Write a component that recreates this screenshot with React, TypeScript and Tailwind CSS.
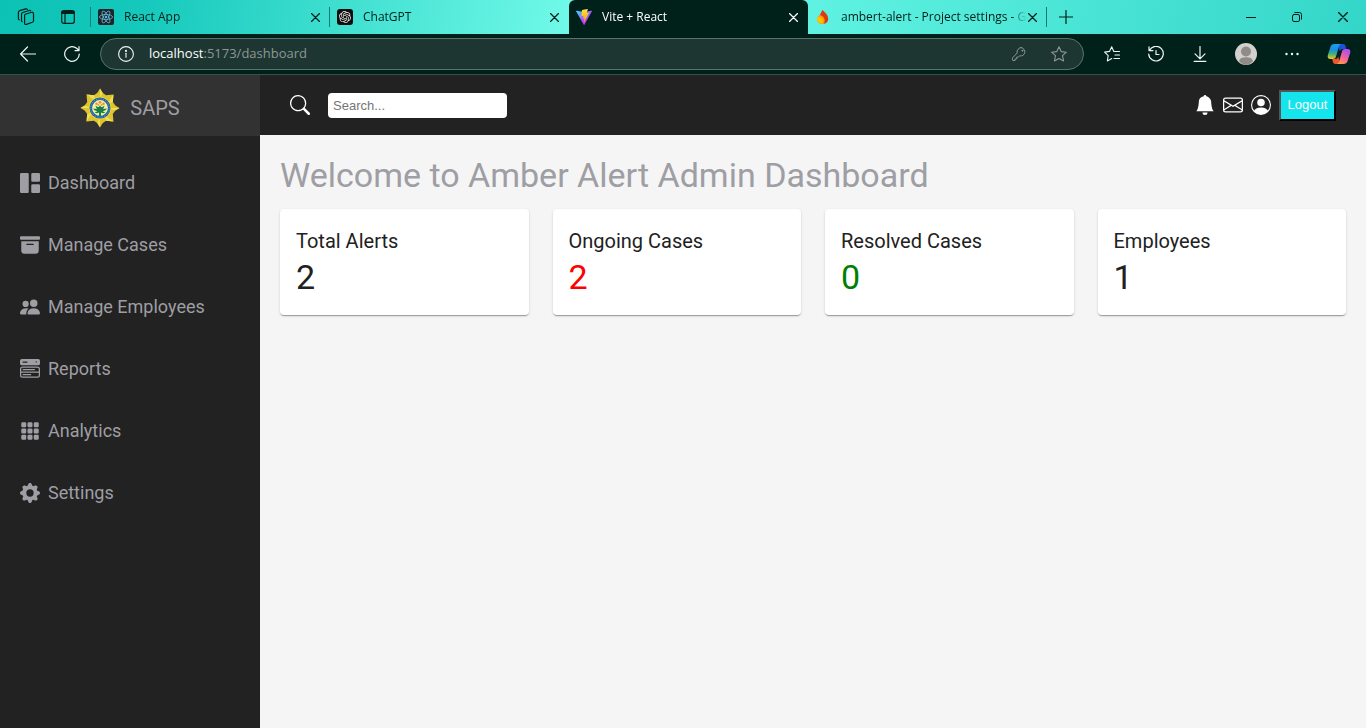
import type { ReactNode } from "react";
import {
  BsGrid1X2Fill,
  BsFillArchiveFill,
  BsPeopleFill,
  BsMenuButtonWideFill,
  BsFillGrid3X3GapFill,
  BsFillGearFill,
  BsSearch,
  BsFillBellFill,
  BsEnvelope,
  BsPersonCircle,
} from "react-icons/bs";
import { SiOpenai } from "react-icons/si";

const line = {
  fill: "none",
  stroke: "currentColor",
  strokeLinecap: "round",
  strokeLinejoin: "round",
} as const;

function CloseIcon({ className = "size-[9px]" }: { className?: string }) {
  return (
    <svg viewBox="0 0 9 9" className={className} {...line} strokeWidth="1.2">
      <path d="M.5.5l8 8M8.5.5l-8 8" />
    </svg>
  );
}

function WorkspacesIcon() {
  return (
    <svg viewBox="0 0 18 18" className="size-[18px]" {...line} strokeWidth="1.2">
      <path d="M8.2 6.3l6.6-2c.9-.3 1.7.3 1.7 1.2v7.2c0 .8-.4 1.3-1.1 1.6l-6 2.1c-1 .3-1.8-.2-1.8-1.2V7.700c0-.7.1-1.200.6-1.400z" />
      <path d="M5.200 13.800c-.5-.2-.7-.7-.7-1.300V6.200c0-.9.4-1.400 1.200-1.700l6.500-2c.6-.1 1.100 0 1.500.4" />
      <path d="M2.200 11.800c-.5-.2-.8-.7-.8-1.300V4.400c0-.9.4-1.400 1.200-1.700L8.800.9c.7-.2 1.200 0 1.600.4" />
    </svg>
  );
}

function TabActionsIcon() {
  return (
    <svg viewBox="0 0 14 14" className="size-[14px]" {...line} strokeWidth="1.2">
      <rect x=".7" y=".7" width="12.6" height="12.6" rx="2" />
      <path d="M1 1.900h12M1 3h12" strokeWidth="1.8" />
      <path d="M4 4v9" />
    </svg>
  );
}

function ReactLogo() {
  return (
    <svg viewBox="0 0 16 16" className="size-4 shrink-0">
      <rect width="16" height="16" rx="2" fill="#20232a" />
      <g fill="none" stroke="#61b9d8" strokeWidth=".8">
        <ellipse cx="8" cy="8" rx="6.6" ry="2.5" />
        <ellipse cx="8" cy="8" rx="6.6" ry="2.5" transform="rotate(60 8 8)" />
        <ellipse cx="8" cy="8" rx="6.6" ry="2.5" transform="rotate(120 8 8)" />
      </g>
      <circle cx="8" cy="8" r="1.3" fill="#61b9d8" />
    </svg>
  );
}

function ChatLogo() {
  return (
    <span className="flex size-4 shrink-0 items-center justify-center rounded-[3px] bg-[#0d0d0d] text-[#e8e8e8]">
      <SiOpenai className="size-3" />
    </span>
  );
}

function ViteLogo() {
  return (
    <svg viewBox="0 0 256 257" className="size-4 shrink-0">
      <defs>
        <linearGradient id="vite-a" x1="-.8%" x2="57.6%" y1="7.6%" y2="78.4%">
          <stop offset="0%" stopColor="#41D1FF" />
          <stop offset="100%" stopColor="#BD34FE" />
        </linearGradient>
        <linearGradient id="vite-b" x1="43.4%" x2="50.3%" y1="2.2%" y2="89%">
          <stop offset="0%" stopColor="#FFEA83" />
          <stop offset="8.3%" stopColor="#FFDD35" />
          <stop offset="100%" stopColor="#FFA800" />
        </linearGradient>
      </defs>
      <path
        fill="url(#vite-a)"
        d="M255.153 37.938L134.897 252.976c-2.483 4.440-8.862 4.466-11.382.048L.875 37.958c-2.746-4.814 1.371-10.646 6.827-9.670l120.385 21.517a6.537 6.537 0 0 0 2.322-.004l117.867-21.483c5.438-.991 9.574 4.796 6.877 9.620z"
      />
      <path
        fill="url(#vite-b)"
        d="M185.432.063L96.440 17.501a3.268 3.268 0 0 0-2.634 3.014l-5.474 92.456a3.268 3.268 0 0 0 3.997 3.378l24.777-5.718c2.318-.535 4.413 1.507 3.936 3.838l-7.361 36.047c-.495 2.426 1.782 4.500 4.151 3.780l15.304-4.649c2.372-.720 4.652 1.360 4.150 3.788l-11.698 56.621c-.732 3.542 3.979 5.473 5.943 2.437l1.313-2.028 72.516-144.720c1.215-2.423-.880-5.186-3.540-4.672l-25.505 4.922c-2.396.462-4.435-1.770-3.759-4.114l16.646-57.705c.677-2.350-1.370-4.583-3.769-4.113z"
      />
    </svg>
  );
}

function FlameLogo() {
  return (
    <svg viewBox="0 0 16 16" className="size-4 shrink-0">
      <path d="M7.400 1c3 2.500 5.800 5 5.800 8.800 0 3-2.200 5-5 5.200-2.300.1-3.700-1-4.200-3.400C3.200 7.500 5.500 5.500 7.400 1z" fill="#e03a0c" />
      <path d="M2 10.500c0-2.500 1.500-4 3.500-4.200 2.500.6 4 2.700 4.200 5.200 0 1.300-.3 2.300-1 3.400C5 15.200 2.200 14 2 10.500z" fill="#ff9f0a" />
      <path d="M2 10.500c0-1.500.8-2.500 2-2.800 2.200.6 3.600 2.300 3.800 4.300 0 .9-.1 1.500-.4 2.200C4.800 14.300 2.200 13.300 2 10.500z" fill="#ffc400" />
    </svg>
  );
}

function PoliceBadge() {
  return (
    <svg viewBox="0 0 40 40" className="size-10">
      <path
        d="M20 .5l2.600 4.200 3.400 2.500 7.500-.7-.7 7.500 2.500 3.400 4.200 2.600-4.200 2.600-2.500 3.400.7 7.500-7.500-.7-3.400 2.500L20 39.500l-2.600-4.200-3.400-2.500-7.500.7.7-7.500-2.500-3.400L.5 20l4.200-2.600L7.200 14l-.7-7.500 7.500.7 3.400-2.500z"
        fill="#dfc32c"
      />
      <g fill="#f1dd52">
        <path d="M20 .5l2.600 4.200L20 12zM39.500 20l-4.200 2.600L28 20zM20 39.500l-2.600-4.200L20 28zM.5 20l4.200-2.600L12 20z" />
        <path d="M6.500 6.500l7.500.7 2 5.800zM33.500 6.500l-.7 7.500-5.800 2zM33.500 33.500l-7.500-.7-2-5.800zM6.500 33.500l.7-7.500 5.800-2z" />
      </g>
      <circle cx="20" cy="20" r="11.200" fill="#ead545" />
      <circle cx="20" cy="20" r="9.200" fill="#f6f29c" stroke="#1c62a6" strokeWidth="2.600" />
      <circle cx="20" cy="20" r="9.200" fill="none" stroke="#8db9d6" strokeWidth=".8" strokeDasharray="1 1.3" />
      <path
        d="M19 28v-3.500c-1.800 1-3.600.8-4.500-.5 1.300.1 2.300-.3 2.800-1-1.800.2-3.500-.8-4-2.700 1.500.8 3 .6 3.800.2-1-.7-1.500-1.800-1.400-3 1 1 2 1.500 3.300 1.600L20 17l1 2.100c1.300-.1 2.300-.6 3.300-1.600.1 1.200-.4 2.300-1.400 3 .8.4 2.300.6 3.800-.2-.5 1.900-2.200 2.900-4 2.700.5.7 1.500 1.100 2.800 1-.9 1.300-2.700 1.500-4.500.5V28z"
        fill="#16804a"
      />
      <g fill="#f08648">
        <circle cx="16.500" cy="15.800" r="1.200" />
        <circle cx="20" cy="14.300" r="1.400" />
        <circle cx="23.500" cy="15.800" r="1.200" />
        <circle cx="18.300" cy="16.800" r=".9" />
        <circle cx="21.700" cy="16.800" r=".9" />
      </g>
    </svg>
  );
}

function CopilotLogo() {
  return (
    <svg viewBox="0 0 24 24" className="size-6">
      <defs>
        <linearGradient id="cp-a" x1=".3" y1="0" x2=".2" y2="1">
          <stop offset="0" stopColor="#1b9bf0" />
          <stop offset=".35" stopColor="#1a8fe0" />
          <stop offset=".65" stopColor="#45ac7c" />
          <stop offset="1" stopColor="#f2c91b" />
        </linearGradient>
        <linearGradient id="cp-b" x1=".7" y1="0" x2=".2" y2="1">
          <stop offset="0" stopColor="#a94df5" />
          <stop offset=".5" stopColor="#f0609b" />
          <stop offset="1" stopColor="#ff9a4a" />
        </linearGradient>
      </defs>
      <path d="M11 2h5c1.500 0 2.200.8 2.600 2.200L19.300 7H16c-1.800 0-2.700 1-3.200 2.600z" fill="#1b50d8" />
      <path d="M13 22H8.500c-1.500 0-2.200-.8-2.600-2.200L5.200 17H8c1.800 0 2.700-1 3.200-2.600z" fill="#f2542d" />
      <path d="M7.500 2h7c-1.500.3-2.200 1.300-2.700 3L9 14.500C8.400 16.300 7.500 17 5.800 17H3.300C1.200 17 .2 15.500.8 13.300L3.400 5C4 3 5.300 2 7.500 2z" fill="url(#cp-a)" />
      <path d="M16.500 22h-7c1.500-.3 2.200-1.300 2.700-3L15 9.500C15.600 7.700 16.500 7 18.200 7h2.500c2.100 0 3.100 1.500 2.500 3.700L20.600 19c-.6 2-1.900 3-4.100 3z" fill="url(#cp-b)" />
    </svg>
  );
}

function Tab({
  icon,
  title,
  active = false,
  divider = false,
}: {
  icon: ReactNode;
  title: string;
  active?: boolean;
  divider?: boolean;
}) {
  return (
    <div
      className={`flex h-full w-[239px] min-w-0 items-center pr-[10px] pl-[7px] ${
        active ? "rounded-t-md bg-[#00201a] text-white" : "text-[#00201a]"
      }`}
    >
      {icon}
      <span className="ml-[10px] min-w-0 flex-1 overflow-hidden text-xs whitespace-nowrap [mask-image:linear-gradient(to_right,black_92%,transparent)]">
        {title}
      </span>
      <button aria-label={`Close ${title}`} className="ml-[2px] shrink-0">
        <CloseIcon />
      </button>
      {divider && <span className="-mr-[10px] ml-[9px] h-5 w-px bg-[#0d7d73]" />}
    </div>
  );
}

function BrowserChrome() {
  return (
    <div className="shrink-0 font-['Open_Sans','Noto_Sans',sans-serif]">
      <div className="flex h-[34px] items-center bg-[linear-gradient(100deg,#0cc2b5_0%,#14c8bb_10%,#74fbea_43%,#5cf0e0_62%,#34d6c9_100%)] text-[#00201a]">
        <button aria-label="Workspaces" className="ml-[17px]">
          <WorkspacesIcon />
        </button>
        <button aria-label="Tab actions" className="ml-[26px]">
          <TabActionsIcon />
        </button>
        <span className="ml-[15px] h-5 w-px bg-[#0d7d73]" />
        <Tab icon={<ReactLogo />} title="React App" divider />
        <Tab icon={<ChatLogo />} title="ChatGPT" />
        <Tab icon={<ViteLogo />} title="Vite + React" active />
        <Tab icon={<FlameLogo />} title="ambert-alert - Project settings - G" divider />
        <button aria-label="New tab" className="ml-3">
          <svg viewBox="0 0 14 14" className="size-[14px]" {...line} strokeWidth="1.2">
            <path d="M7 .5v13M.5 7h13" />
          </svg>
        </button>
        <div className="mr-[18px] ml-auto flex items-center gap-9">
          <button aria-label="Minimize">
            <svg viewBox="0 0 10 10" className="size-[10px]" {...line}>
              <path d="M0 5.500h10" />
            </svg>
          </button>
          <button aria-label="Restore">
            <svg viewBox="0 0 10 10" className="size-[10px]" {...line}>
              <rect x=".5" y="2.5" width="7" height="7" rx="1.5" />
              <path d="M2.800.5h4.700a2 2 0 0 1 2 2v4.700" />
            </svg>
          </button>
          <button aria-label="Close window">
            <CloseIcon className="size-[10px]" />
          </button>
        </div>
      </div>

      <div className="flex h-[41px] items-center border-b border-[#34524b] bg-[#00201a] text-[#f0f5f4]">
        <button aria-label="Back" className="ml-5">
          <svg viewBox="0 0 16 16" className="size-4" {...line} strokeWidth="1.2">
            <path d="M15.500 8H.8M7.500 1L.6 8l6.900 7" />
          </svg>
        </button>
        <button aria-label="Reload" className="ml-7">
          <svg viewBox="0 0 16 16" className="size-4" {...line} strokeWidth="1.2">
            <path d="M15.300 8A7.300 7.300 0 1 1 12.600 2.300L15 4.500M15 .7v3.900h-4" />
          </svg>
        </button>
        <div className="ml-5 flex h-8 flex-1 items-center rounded-full border border-[#5a736d] bg-[#1e3631] pr-4 pl-[17px]">
          <svg viewBox="0 0 16 16" className="size-4" {...line} strokeWidth="1.1">
            <circle cx="8" cy="8" r="7.400" />
            <path d="M8 7.300v4" />
            <circle cx="8" cy="4.900" r=".5" fill="currentColor" />
          </svg>
          <span className="ml-[15px] flex-1 text-[13px] text-[#8b9895]">
            <span className="text-white">localhost</span>:5173/dashboard
          </span>
          <button aria-label="Saved passwords" className="text-[#8b9895]">
            <svg viewBox="0 0 14 14" className="size-[14px]" {...line}>
              <path d="M9.200.6a4.200 4.200 0 0 0-4 5.400L.8 10.500c-.2.200-.3.400-.3.700v1.700c0 .4.200.6.600.6h2v-1.600h1.600v-1.700h1.500l1.300-1.400A4.200 4.200 0 1 0 9.200.6z" />
              <circle cx="10.300" cy="3.700" r=".5" fill="currentColor" />
            </svg>
          </button>
          <button aria-label="Add to favorites" className="ml-[25px] text-[#8b9895]">
            <svg viewBox="0 0 16 16" className="size-4" {...line} strokeWidth="1.1">
              <path d="M8 .8l2.200 4.800 5.200.6-3.900 3.500 1.100 5.300L8 12.400 3.400 15l1.100-5.300L.6 6.200l5.200-.6z" />
            </svg>
          </button>
        </div>
        <div className="mr-[15px] ml-5 flex items-center">
          <button aria-label="Favorites">
            <svg viewBox="0 0 16 16" className="size-4" {...line} strokeWidth="1.1">
              <path d="M9.800 5.500L7.700.8 5.500 5.400.6 6.100l3.600 3.500L3.300 15l4.500-2.500M9.800 5.500h5.700M11 9h4.500M10 12.500h5.500" />
            </svg>
          </button>
          <button aria-label="History" className="ml-7">
            <svg viewBox="0 0 16 16" className="size-4" {...line} strokeWidth="1.2">
              <path d="M1.500 4.300A7.300 7.300 0 1 1 .7 8M1 .8v3.800h3.900M8 4.500v4h3" />
            </svg>
          </button>
          <button aria-label="Downloads" className="ml-7">
            <svg viewBox="0 0 16 16" className="size-4" {...line} strokeWidth="1.2">
              <path d="M8 .5v12M3 7.800l5 5 5-5M2.200 15.400h11.600" />
            </svg>
          </button>
          <button aria-label="Profile" className="ml-[27px]">
            <svg viewBox="0 0 22 22" className="size-[22px]">
              <circle cx="11" cy="11" r="11" fill="#d4d0cd" />
              <circle cx="11" cy="8.500" r="5" fill="#8f8b88" />
              <path d="M4.200 18.500c0-3.500 3-4.300 6.800-4.300s6.800.8 6.800 4.300A11 11 0 0 1 11 22a11 11 0 0 1-6.800-3.500z" fill="#8f8b88" />
            </svg>
          </button>
          <button aria-label="Settings and more" className="ml-7">
            <svg viewBox="0 0 14 4" className="h-1 w-[14px]" fill="currentColor">
              <circle cx="1.500" cy="2" r="1.200" />
              <circle cx="7" cy="2" r="1.200" />
              <circle cx="12.500" cy="2" r="1.200" />
            </svg>
          </button>
          <button aria-label="Copilot" className="ml-7">
            <CopilotLogo />
          </button>
        </div>
      </div>
    </div>
  );
}

const menu = [
  { label: "Dashboard", Icon: BsGrid1X2Fill },
  { label: "Manage Cases", Icon: BsFillArchiveFill },
  { label: "Manage Employees", Icon: BsPeopleFill },
  { label: "Reports", Icon: BsMenuButtonWideFill },
  { label: "Analytics", Icon: BsFillGrid3X3GapFill },
  { label: "Settings", Icon: BsFillGearFill },
];

const stats = [
  { label: "Total Alerts", value: 2, color: "text-[#212121]" },
  { label: "Ongoing Cases", value: 2, color: "text-[#ff0000]" },
  { label: "Resolved Cases", value: 0, color: "text-[#008000]" },
  { label: "Employees", value: 1, color: "text-[#212121]" },
];

function Sidebar() {
  return (
    <aside className="w-[260px] shrink-0 bg-[#222222] text-[#9e9ea4]">
      <div className="flex h-[61px] items-center justify-center gap-[10px] bg-[#323232] pt-1 text-xl">
        <PoliceBadge />
        <span>SAPS</span>
      </div>
      <nav className="pt-4">
        <ul>
          {menu.map(({ label, Icon }) => (
            <li key={label}>
              <a href="#" className="flex h-[62px] items-center gap-2 px-5 text-lg">
                <Icon className="size-5" />
                {label}
              </a>
            </li>
          ))}
        </ul>
      </nav>
    </aside>
  );
}

function Header() {
  return (
    <header className="flex h-[60px] items-center justify-between bg-[#222222] px-[30px] text-white">
      <div className="flex items-center gap-[18px]">
        <BsSearch className="size-5" />
        <input
          type="text"
          aria-label="Search"
          placeholder="Search..."
          className="h-[25px] w-[179px] rounded-[4px] bg-white px-[5px] font-['Liberation_Sans',Arial,sans-serif] text-[13px] text-black placeholder:text-[#757575]"
        />
      </div>
      <div className="flex items-center gap-2">
        <BsFillBellFill className="size-5" />
        <BsEnvelope className="size-5" />
        <BsPersonCircle className="size-5" />
        <button className="h-[31px] w-[57px] border-2 border-t-[#555555] border-r-black border-b-black border-l-[#555555] bg-[#14e4ec] font-['Liberation_Sans',Arial,sans-serif] text-[13px] text-white">
          Logout
        </button>
      </div>
    </header>
  );
}

export default function App() {
  return (
    <div className="flex min-h-screen flex-col font-[Roboto,sans-serif]">
      <BrowserChrome />
      <div className="flex flex-1">
        <Sidebar />
        <div className="min-w-0 flex-1 bg-[#f5f5f5]">
          <Header />
          <main className="p-5">
            <h1 className="mb-[14px] text-[34px] leading-10 text-[#9e9ea4]">
              Welcome to Amber Alert Admin Dashboard
            </h1>
            <div className="grid grid-cols-4 gap-6">
              {stats.map(({ label, value, color }) => (
                <section
                  key={label}
                  className="rounded-[4px] bg-white px-4 pt-4 pb-[18px] text-[#212121] shadow-[0_2px_1px_-1px_rgba(0,0,0,0.2),0_1px_1px_0_rgba(0,0,0,0.14),0_1px_3px_0_rgba(0,0,0,0.12)]"
                >
                  <h2 className="text-xl leading-8">{label}</h2>
                  <p className={`text-[34px] leading-10 ${color}`}>{value}</p>
                </section>
              ))}
            </div>
          </main>
        </div>
      </div>
    </div>
  );
}
